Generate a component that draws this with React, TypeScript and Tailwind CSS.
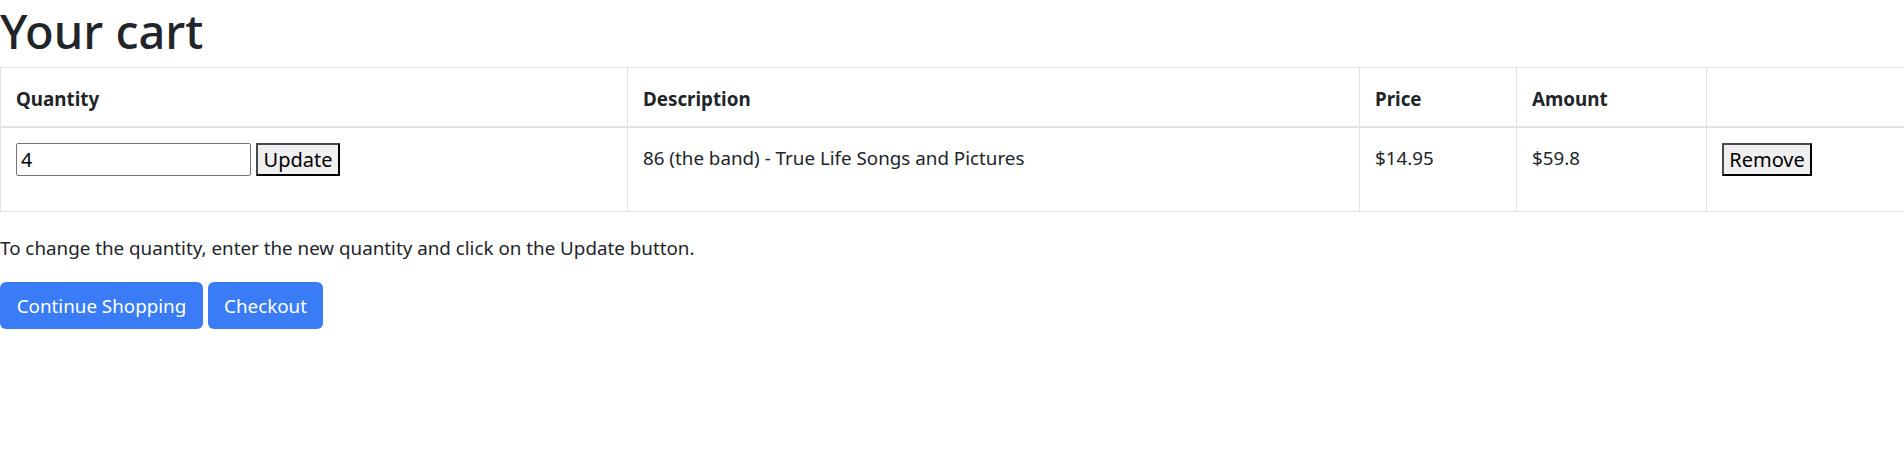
const th = "border border-[#dee2e6] border-b-2 border-b-[#dee2e6] px-[15px] pt-[16px] pb-[12px] text-left font-bold align-top";
const td = "border border-[#dee2e6] px-[15px] py-[15px] align-top";

const OldButton = ({ label, width }: { label: string; width: string }) => (
    <button
        className={`${width} h-[33px] bg-[#efefef] text-black text-[20px] border-2 border-t-[#4a4a4a] border-l-[#4a4a4a] border-r-black border-b-black leading-none`}
    >
        {label}
    </button>
);

export default function App() {
    return (
        <div className="font-['Noto_Sans',sans-serif] text-[18.8px] leading-[30px] text-[#212529] bg-white min-h-screen">
            <h1 className="text-[47px] leading-[62px] font-medium mb-[5px]">Your cart</h1>

            <table className="w-full table-fixed border-collapse mb-[21px]">
                <colgroup>
                    <col className="w-[627px]" />
                    <col className="w-[732px]" />
                    <col className="w-[157px]" />
                    <col className="w-[190px]" />
                    <col />
                </colgroup>
                <thead>
                    <tr>
                        <th className={th}>Quantity</th>
                        <th className={th}>Description</th>
                        <th className={th}>Price</th>
                        <th className={th}>Amount</th>
                        <th className={`${th} border-r-0`}></th>
                    </tr>
                </thead>
                <tbody>
                    <tr>
                        <td className={td}>
                            <form
                                className="flex gap-[5px] mb-[20px]"
                                onSubmit={(e) => {
                                    e.preventDefault();
                                }}
                            >
                                <input
                                    type="text"
                                    defaultValue="4"
                                    className="w-[235px] h-[33px] border border-[#767676] rounded-[2px] px-[4px] text-black text-[19.5px]"
                                />
                                <OldButton label="Update" width="w-[84px]" />
                            </form>
                        </td>
                        <td className={td}>86 (the band) - True Life Songs and Pictures</td>
                        <td className={td}>$14.95</td>
                        <td className={td}>$59.8</td>
                        <td className={`${td} border-r-0`}>
                            <form className="mb-[20px]">
                                <OldButton label="Remove" width="w-[90px]" />
                            </form>
                        </td>
                    </tr>
                </tbody>
            </table>

            <p className="mb-[19px]">To change the quantity, enter the new quantity and click on the Update button.</p>

            <div className="flex gap-[5px]">
                <button className="w-[203px] h-[47px] rounded-[6px] bg-[#3a7cf5] text-white">Continue Shopping</button>
                <button className="w-[115px] h-[47px] rounded-[6px] bg-[#3a7cf5] text-white">Checkout</button>
            </div>
        </div>
    );
}
